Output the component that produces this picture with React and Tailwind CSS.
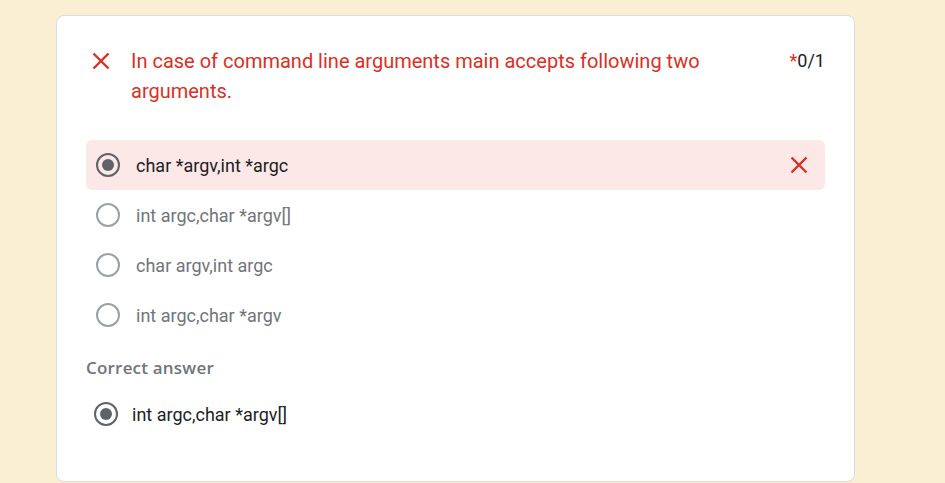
import React from "react";

function XIcon({ className }) {
  return (
    <svg viewBox="0 0 18 18" className={className} fill="none">
      <path d="M1.5 1.5L16.5 16.5M16.5 1.5L1.5 16.5" stroke="currentColor" strokeWidth="2.4" />
    </svg>
  );
}

function Radio({ checked }) {
  return (
    <div
      className={
        "w-[24px] h-[24px] rounded-full border-2 flex items-center justify-center shrink-0 " +
        (checked ? "border-[#5f6368]" : "border-[#9aa0a6]")
      }
    >
      {checked && <div className="w-[12px] h-[12px] rounded-full bg-[#5f6368]" />}
    </div>
  );
}

const options = [
  { label: "char *argv,int *argc", chosen: true },
  { label: "int argc,char *argv[]" },
  { label: "char argv,int argc" },
  { label: "int argc,char *argv" },
];

export default function App() {
  return (
    <div className="min-h-screen bg-[#fbefd3] pt-[15px] pl-[56px] overflow-hidden" style={{ fontFamily: "Roboto, Arial, sans-serif" }}>
      <div className="w-[799px] bg-white border border-[#dadce0] rounded-[8px] px-[29px] pt-[30px] pb-[42px]">
        <div className="flex items-start">
          <div className="w-[45px] pt-[6px] pl-[6px] shrink-0">
            <XIcon className="w-[18px] h-[18px] text-[#d93025]" />
          </div>
          <p className="flex-1 text-[20px] leading-[30px] text-[#d93025] pr-[80px]">
            In case of command line arguments main accepts following two arguments.
          </p>
          <div className="text-[18px] leading-[30px] text-[#202124]">
            <span className="text-[#d93025]">*</span>0/1
          </div>
        </div>

        <div className="mt-[34px]">
          {options.map((o) => (
            <div
              key={o.label}
              className={
                "h-[50px] flex items-center pl-[10px] pr-[17px] rounded-[6px] " +
                (o.chosen ? "bg-[#fce8e6]" : "")
              }
            >
              <Radio checked={o.chosen} />
              <span
                className={
                  "ml-[16px] flex-1 text-[18px] " + (o.chosen ? "text-[#202124]" : "text-[#70757a]")
                }
              >
                {o.label}
              </span>
              {o.chosen && <XIcon className="w-[18px] h-[18px] text-[#d93025]" />}
            </div>
          ))}
        </div>

        <div
          className="mt-[17px] text-[17px] font-semibold tracking-[0.2px] text-[#70757a] leading-[22px]"
          style={{ fontFamily: "'Open Sans', Arial, sans-serif" }}
        >
          Correct answer
        </div>

        <div className="h-[50px] mt-[10px] flex items-center pl-[8px]">
          <Radio checked />
          <span className="ml-[14px] text-[18px] text-[#202124]">int argc,char *argv[]</span>
        </div>
      </div>
    </div>
  );
}
